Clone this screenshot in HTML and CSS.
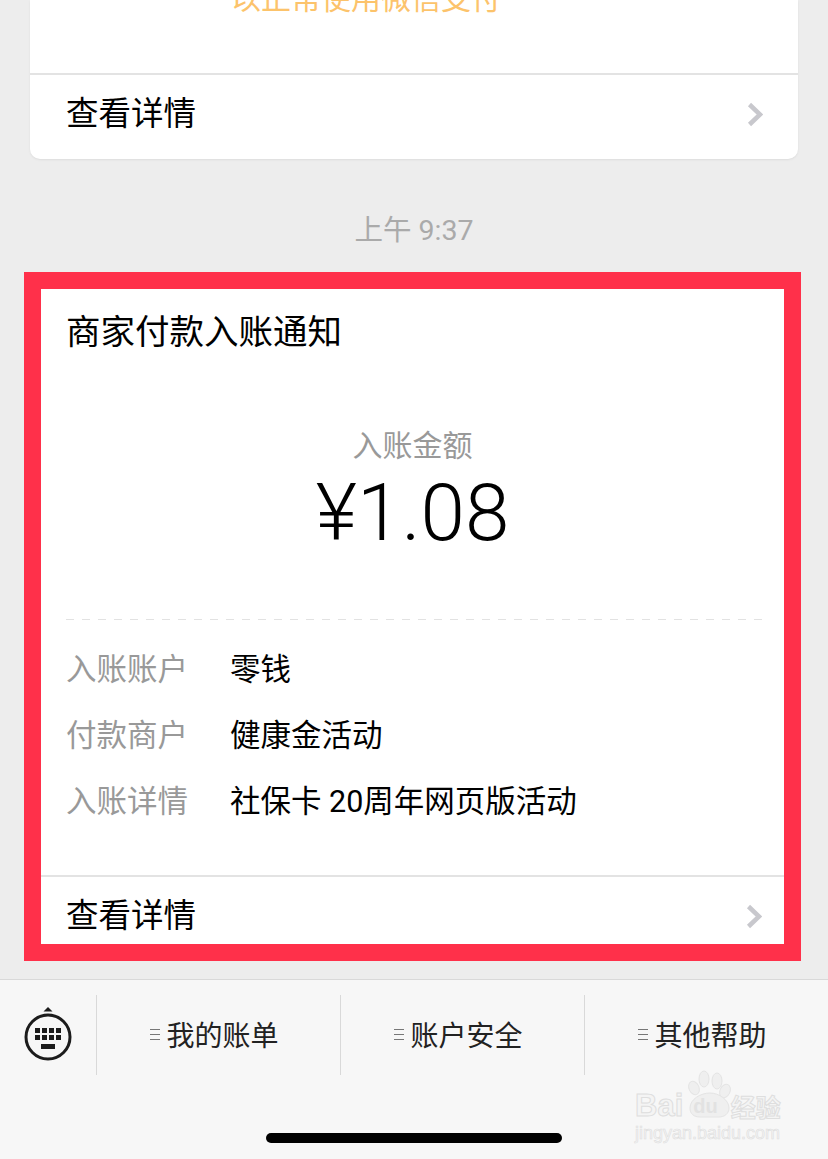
FILE: index.html
```html
<!DOCTYPE html>
<html lang="zh-CN">
<head>
  <meta charset="UTF-8">
  <title>商家付款入账通知</title>
  <link rel="stylesheet" href="styles.css">
</head>
<body>

  <!-- Carte précédente, coupée en haut -->
  <section class="carte-haut">
    <p class="carte-texte">以正常使用微信支付</p>
    <div class="lien">
      <span>查看详情</span>
      <svg class="fleche" viewBox="0 0 16 25"><path d="M2.5 2.5L13 12.5 2.5 22.5" /></svg>
    </div>
  </section>

  <p class="heure">上午 9:37</p>

  <!-- Carte encadrée en rouge -->
  <section class="cadre">
    <div class="carte">
      <h1 class="titre">商家付款入账通知</h1>
      <p class="montant-label">入账金额</p>
      <p class="montant">¥1.08</p>
      <div class="pointilles"></div>
      <dl class="details">
        <div class="ligne"><dt>入账账户</dt><dd>零钱</dd></div>
        <div class="ligne"><dt>付款商户</dt><dd>健康金活动</dd></div>
        <div class="ligne"><dt>入账详情</dt><dd>社保卡 20周年网页版活动</dd></div>
      </dl>
      <div class="lien lien-bas">
        <span>查看详情</span>
        <svg class="fleche" viewBox="0 0 16 25"><path d="M2.5 2.5L13 12.5 2.5 22.5" /></svg>
      </div>
    </div>
  </section>

  <!-- Barre de menu du bas -->
  <footer class="barre">
    <div class="menu">
      <div class="clavier">
        <svg viewBox="0 0 48 54" width="48" height="54">
          <path class="clavier-pointe" d="M24 0l4.5 4.5h-9z" />
          <circle class="clavier-rond" cx="24" cy="30" r="22" />
          <g class="clavier-touches">
            <rect x="11" y="21" width="5" height="5" /><rect x="18" y="21" width="5" height="5" />
            <rect x="25" y="21" width="5" height="5" /><rect x="32" y="21" width="5" height="5" />
            <rect x="11" y="28" width="5" height="5" /><rect x="18" y="28" width="5" height="5" />
            <rect x="25" y="28" width="5" height="5" /><rect x="32" y="28" width="5" height="5" />
            <rect x="17" y="37" width="14" height="5" />
          </g>
        </svg>
      </div>
      <div class="onglet"><i class="traits"></i>我的账单</div>
      <div class="onglet"><i class="traits"></i>账户安全</div>
      <div class="onglet"><i class="traits"></i>其他帮助</div>
    </div>
    <div class="indicateur"></div>
  </footer>

  <!-- Filigrane -->
  <div class="filigrane">
    <svg class="patte" viewBox="0 0 50 50" width="50" height="50">
      <ellipse cx="7" cy="18" rx="5" ry="7" transform="rotate(-25 7 18)" />
      <ellipse cx="17" cy="9" rx="5" ry="8" />
      <ellipse cx="30" cy="11" rx="5" ry="8" />
      <ellipse cx="38" cy="21" rx="5" ry="7" transform="rotate(25 38 21)" />
      <path d="M3 38c0-9 11-15 20-15s19 7 19 15c0 6-5 9-10 9H13C7 47 3 44 3 38z" />
    </svg>
    <div class="filigrane-nom"><span class="filigrane-bai">Bai</span><span class="filigrane-du">du</span><span class="filigrane-cjk">经验</span></div>
    <div class="filigrane-url">jingyan.baidu.com</div>
  </div>

</body>
</html>
```

FILE: styles.css
```css
/* Base de la page */
html, body {
  margin: 0;
  padding: 0;
}

body {
  position: relative;
  width: 828px;
  height: 1159px;
  overflow: hidden;
  background-color: #ededed;
  color: #000;
  font-family: "Noto Sans CJK SC", "Noto Sans", sans-serif;
}

p, h1, dl, dd {
  margin: 0;
}

/* Carte du haut */
.carte-haut {
  height: 159px;
  margin: 0 30px;
  overflow: hidden;
  background-color: #fff;
  border-radius: 0 0 10px 10px;
  box-shadow: 0 1px 2px #ddd;
}

.carte-texte {
  height: 77px;
  margin-top: -4px;
  box-sizing: border-box;
  padding-right: 96px;
  color: #fcc36b;
  font-size: 30px;
  line-height: 0;
  text-align: center;
}

.lien {
  display: flex;
  justify-content: space-between;
  height: 84px;
  box-sizing: border-box;
  padding: 14px 35px 0 36px;
  border-top: 2px solid #e3e3e3;
  font-size: 32.5px;
  line-height: 44px;
}

.lien-bas {
  height: 69px;
  padding: 14px 22px 0 25px;
  overflow: hidden;
}

.fleche {
  width: 16px;
  height: 25px;
  margin-top: 13px;
  fill: none;
  stroke: #c8c8cd;
  stroke-width: 4.5;
}

.heure {
  height: 113px;
  color: #aaa;
  font-family: Roboto, "Noto Sans CJK SC", sans-serif;
  font-size: 28.5px;
  line-height: 143px;
  text-align: center;
}

/* Cadre rouge */
.cadre {
  box-sizing: border-box;
  width: 777px;
  height: 689px;
  margin-left: 24px;
  border: 17px solid #ff304a;
  background-color: #fff;
}

.carte {
  height: 655px;
  overflow: hidden;
}

.titre {
  height: 122px;
  padding: 19px 0 0 25px;
  box-sizing: border-box;
  font-size: 34.5px;
  font-weight: 400;
  line-height: 42px;
}

.montant-label {
  color: #999;
  font-size: 30px;
  line-height: 64px;
  text-align: center;
}

.montant {
  height: 144px;
  font-family: Roboto, "Noto Sans CJK SC", sans-serif;
  font-size: 80px;
  font-weight: 300;
  line-height: 76px;
  text-align: center;
}

.pointilles {
  height: 1px;
  margin: 0 21px 0 25px;
  background: repeating-linear-gradient(90deg, #e2e2e2 0, #e2e2e2 8px, transparent 8px, transparent 16px);
}

.details {
  padding: 17px 0 40px 25px;
  font-family: Roboto, "Noto Sans CJK SC", sans-serif;
  font-size: 30.5px;
}

.ligne {
  display: flex;
  height: 66px;
  line-height: 66px;
}

.ligne dt {
  width: 164px;
  color: #999;
}

/* Barre du bas */
.barre {
  height: 180px;
  margin-top: 18px;
  box-sizing: border-box;
  padding-top: 15px;
  border-top: 1px solid #d9d9d9;
  background-color: #f7f7f7;
}

.menu {
  display: grid;
  grid-template-columns: 96px 244px 244px 244px;
  height: 80px;
}

.clavier {
  display: flex;
  justify-content: center;
  padding-top: 12px;
}

.clavier-pointe,
.clavier-touches {
  fill: #1c1c1c;
}

.clavier-rond {
  fill: none;
  stroke: #1c1c1c;
  stroke-width: 3;
}

.onglet {
  display: flex;
  justify-content: center;
  align-items: center;
  gap: 6px;
  box-sizing: border-box;
  padding: 0 8px 2px 0;
  border-left: 1px solid #d9d9d9;
  color: #222;
  font-size: 28px;
}

.traits {
  width: 10px;
  height: 9px;
  border-top: 1px solid #777;
  border-bottom: 1px solid #777;
  background: linear-gradient(#777, #777) center / 100% 1px no-repeat;
}

.indicateur {
  width: 296px;
  height: 10px;
  margin: 58px auto 0;
  border-radius: 5px;
  background-color: #000;
}

/* Filigrane par-dessus la barre */
.filigrane {
  position: absolute;
  left: 635px;
  top: 1070px;
  width: 150px;
  height: 72px;
  padding-top: 19px;
  box-sizing: border-box;
  color: #f4f4f4;
  -webkit-text-stroke: 1px #dedede;
}

.patte {
  position: absolute;
  left: 52px;
  top: 0;
  fill: #efefef;
  stroke: #e4e4e4;
}

.filigrane-nom {
  position: relative;
  display: flex;
  align-items: center;
  height: 34px;
  font-family: "Liberation Sans", sans-serif;
  font-size: 31px;
  font-weight: 700;
  white-space: nowrap;
}

.filigrane-du {
  margin-left: 10px;
  font-size: 20px;
  -webkit-text-stroke: 0;
  color: #e2e2e2;
}

.filigrane-cjk {
  margin-left: 13px;
  font-family: "Noto Sans CJK SC", sans-serif;
  font-size: 25px;
}

.filigrane-url {
  position: relative;
  font-family: "Liberation Sans", sans-serif;
  font-size: 18px;
  line-height: 20px;
  white-space: nowrap;
  -webkit-text-stroke: 0.6px #dedede;
}
```
